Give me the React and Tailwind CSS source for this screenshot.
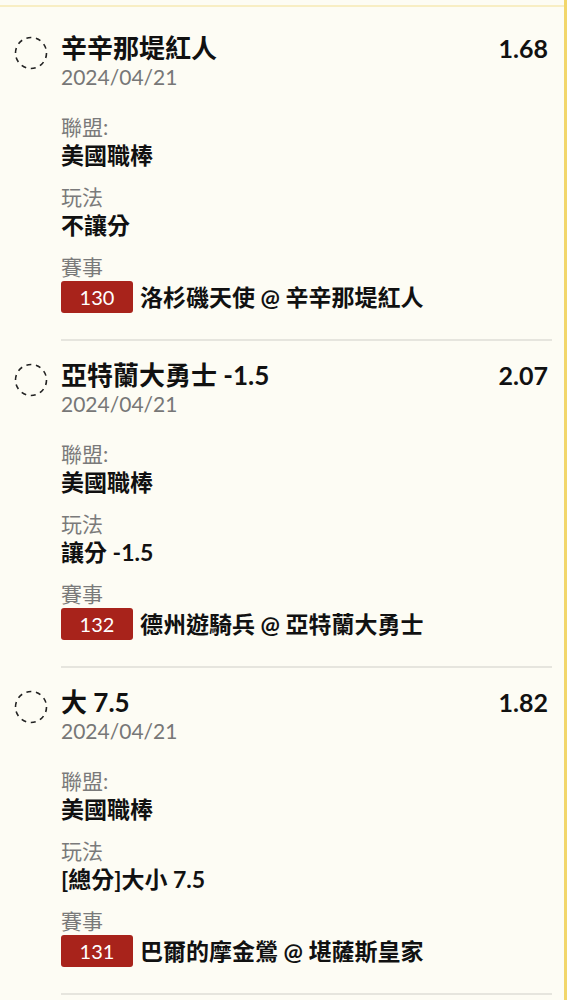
const bets = [
  {
    pick: "辛辛那堤紅人",
    odds: "1.68",
    date: "2024/04/21",
    league: "美國職棒",
    play: "不讓分",
    no: "130",
    match: "洛杉磯天使 @ 辛辛那堤紅人",
  },
  {
    pick: "亞特蘭大勇士 -1.5",
    odds: "2.07",
    date: "2024/04/21",
    league: "美國職棒",
    play: "讓分 -1.5",
    no: "132",
    match: "德州遊騎兵 @ 亞特蘭大勇士",
  },
  {
    pick: "大 7.5",
    odds: "1.82",
    date: "2024/04/21",
    league: "美國職棒",
    play: "[總分]大小 7.5",
    no: "131",
    match: "巴爾的摩金鶯 @ 堪薩斯皇家",
  },
];

function DashedCircle() {
  return (
    <svg width="34" height="34" viewBox="0 0 34 34" className="mt-[3px] shrink-0">
      <circle
        cx="17"
        cy="17"
        r="15.5"
        fill="none"
        stroke="#222"
        strokeWidth="1.6"
        strokeDasharray="5 4.7"
      />
    </svg>
  );
}

function Field({ label, children, last }) {
  return (
    <div className={last ? "" : "mb-[14px]"}>
      <div className="text-[21px] leading-[28px] text-[#7a7a7a]">{label}</div>
      {children}
    </div>
  );
}

function BetItem({ bet }) {
  return (
    <div className="flex gap-[13px] pl-[14px] pr-[12px] pt-[19px]">
      <DashedCircle />
      <div className="flex-1 border-b-2 border-[#e6e5de] pb-[26px]">
        {/* title + odds */}
        <div className="flex items-center justify-between pr-[4px]">
          <div className="text-[26px] leading-[30px] font-bold text-[#111]">{bet.pick}</div>
          <div className="text-[25px] leading-[30px] font-bold text-[#111]">{bet.odds}</div>
        </div>
        <div className="text-[21px] leading-[28px] text-[#777]">{bet.date}</div>

        <div className="mt-[22px]">
          <Field label="聯盟:">
            <div className="text-[23px] leading-[28px] font-bold text-[#111]">{bet.league}</div>
          </Field>
          <Field label="玩法">
            <div className="text-[23px] leading-[28px] font-bold text-[#111]">{bet.play}</div>
          </Field>
          <Field label="賽事" last>
            <div className="flex items-center gap-[7px] h-[32px]">
              <span className="w-[72px] h-[32px] rounded-[3px] bg-[#a8231b] text-white text-[20px] flex items-center justify-center">
                {bet.no}
              </span>
              <span className="text-[23px] leading-[28px] font-bold text-[#111]">{bet.match}</span>
            </div>
          </Field>
        </div>
      </div>
    </div>
  );
}

export default function App() {
  return (
    <div className="flex h-screen overflow-hidden bg-white font-['Lato','Noto_Sans_CJK_TC',sans-serif]">
      <div className="w-[567px] shrink-0 bg-[#fdfcf4] border-r-[3px] border-[#f2d66b] pt-[5px]">
        <div className="border-t-2 border-[#f8eec4] pt-[7px]">
          {bets.map((b) => (
            <BetItem key={b.no} bet={b} />
          ))}
        </div>
      </div>
    </div>
  );
}
